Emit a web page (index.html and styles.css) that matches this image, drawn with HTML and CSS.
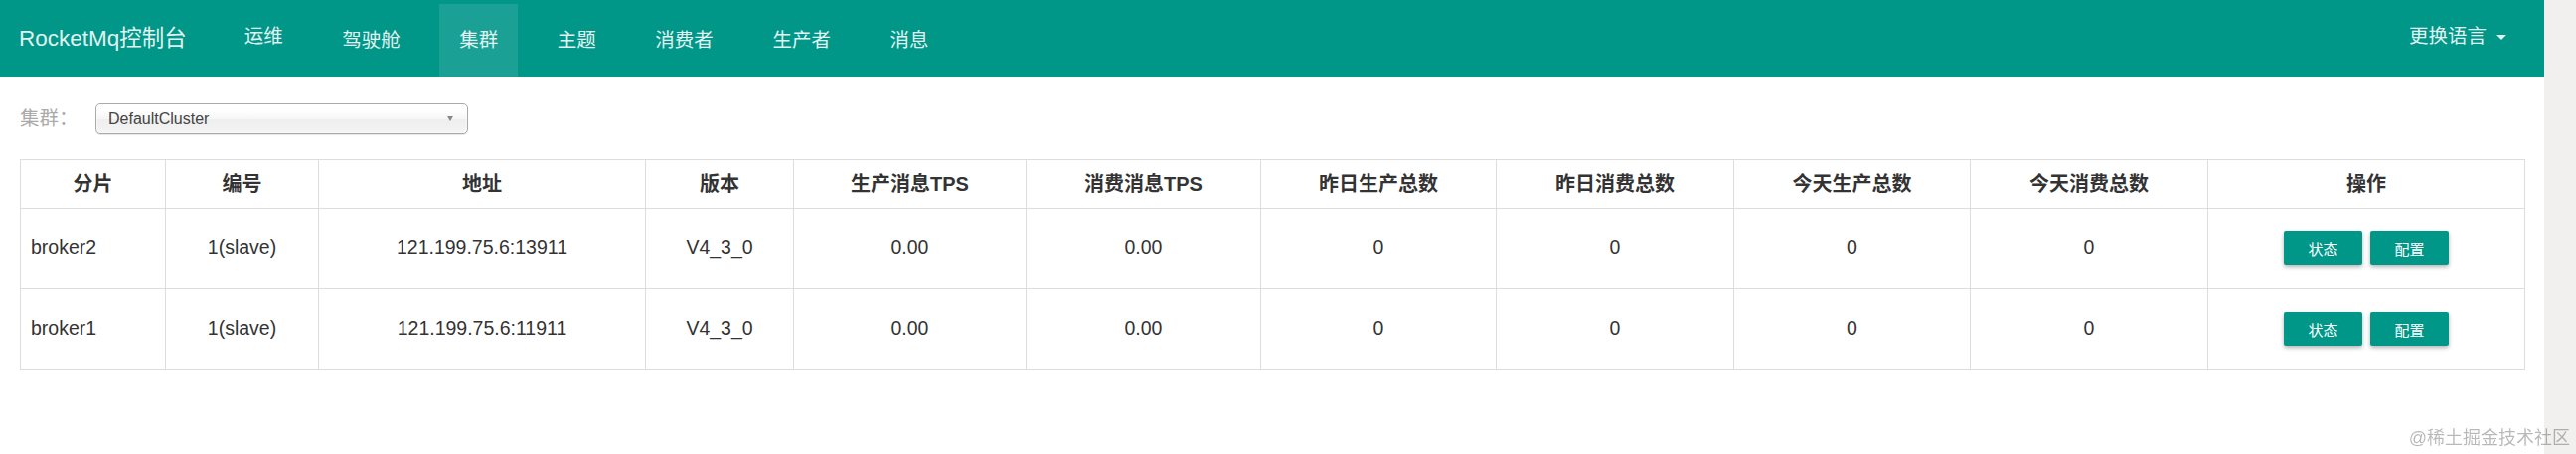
FILE: index.html
```html
<!DOCTYPE html>
<html lang="zh-CN">
<head>
<meta charset="utf-8">
<title>RocketMq控制台</title>
<link rel="stylesheet" href="styles.css">
</head>
<body>
<div class="viewport">
  <div class="page">
    <nav class="navbar">
      <div class="brand">RocketMq控制台</div>
      <ul class="nav">
        <li><a class="nav-link raised">运维</a></li>
        <li><a class="nav-link">驾驶舱</a></li>
        <li><a class="nav-link active">集群</a></li>
        <li><a class="nav-link">主题</a></li>
        <li><a class="nav-link">消费者</a></li>
        <li><a class="nav-link">生产者</a></li>
        <li><a class="nav-link">消息</a></li>
      </ul>
      <div class="nav-right">更换语言<span class="caret"></span></div>
    </nav>
    <main class="content">
      <div class="filter">
        <span class="filter-label">集群：</span>
        <div class="select"><span>DefaultCluster</span><span class="select-arrow"></span></div>
      </div>
      <table class="grid">
        <colgroup>
          <col class="w-shard"><col class="w-id"><col class="w-addr"><col class="w-ver">
          <col class="w-tps"><col class="w-tps2"><col class="w-cnt"><col class="w-cnt2">
          <col class="w-cnt3"><col class="w-cnt4"><col class="w-op">
        </colgroup>
        <thead>
          <tr>
            <th>分片</th><th>编号</th><th>地址</th><th>版本</th>
            <th>生产消息TPS</th><th>消费消息TPS</th><th>昨日生产总数</th><th>昨日消费总数</th>
            <th>今天生产总数</th><th>今天消费总数</th><th>操作</th>
          </tr>
        </thead>
        <tbody>
          <tr>
            <td class="shard">broker2</td><td>1(slave)</td><td>121.199.75.6:13911</td><td>V4_3_0</td>
            <td>0.00</td><td>0.00</td><td>0</td><td>0</td><td>0</td><td>0</td>
            <td><div class="actions"><button class="btn">状态</button><button class="btn">配置</button></div></td>
          </tr>
          <tr>
            <td class="shard">broker1</td><td>1(slave)</td><td>121.199.75.6:11911</td><td>V4_3_0</td>
            <td>0.00</td><td>0.00</td><td>0</td><td>0</td><td>0</td><td>0</td>
            <td><div class="actions"><button class="btn">状态</button><button class="btn">配置</button></div></td>
          </tr>
        </tbody>
      </table>
    </main>
  </div>
  <div class="scrolltrack"></div>
</div>
<div class="watermark">@稀土掘金技术社区</div>
</body>
</html>
```
FILE: styles.css
```css
html, body {
  margin: 0;
  padding: 0;
}
body {
  font-family: "Liberation Sans", "Noto Sans CJK SC", sans-serif;
  color: #333;
  background: #fff;
  overflow: hidden;
}
.viewport {
  display: flex;
  height: 457px;
}
.page {
  flex: 1;
  min-width: 0;
}
.scrolltrack {
  width: 32px;
  background: #f1f0ee;
}

/* navbar */
.navbar {
  height: 78px;
  background: #009688;
  display: flex;
  align-items: stretch;
  padding: 0 18px 0 19px;
  color: #e0f2f1;
}
.brand {
  display: flex;
  align-items: center;
  font-size: 22.5px;
  line-height: 1.2;
  padding-bottom: 2px;
  margin-right: 38px;
}
.nav {
  display: flex;
  list-style: none;
  margin: 4px 0 0;
  padding: 0;
  gap: 19.5px;
}
.nav li {
  display: flex;
}
.nav-link {
  display: flex;
  align-items: center;
  padding: 0 20px;
  font-size: 19.5px;
  line-height: 1.2;
  color: #e0f2f1;
}
.nav-link.raised {
  padding-bottom: 9px;
}
.nav-link.active {
  background: rgba(255, 255, 255, 0.1);
}
.nav-right {
  margin-left: auto;
  display: flex;
  align-items: center;
  padding: 0 20px 4px;
  font-size: 19.5px;
  line-height: 1.2;
}
.caret {
  display: inline-block;
  margin-left: 10px;
  width: 0;
  height: 0;
  border-left: 5px solid transparent;
  border-right: 5px solid transparent;
  border-top: 5px solid #e0f2f1;
}

/* content */
.content {
  padding: 0 20px;
}
.filter {
  display: flex;
  align-items: center;
  margin-top: 26px;
  height: 31px;
}
.filter-label {
  font-size: 19.5px;
  color: #aaa;
  margin-right: 17.5px;
  line-height: 1.2;
}
.select {
  width: 375px;
  height: 31px;
  box-sizing: border-box;
  display: flex;
  align-items: center;
  padding: 0 14px 0 12px;
  border: 1px solid #aaa;
  border-radius: 5px;
  background: linear-gradient(#fff 20%, #f6f6f6 50%, #eee 52%, #f4f4f4 100%);
  box-shadow: inset 0 0 3px #fff, 0 1px 1px rgba(0, 0, 0, 0.1);
  font-size: 16px;
  color: #444;
}
.select-arrow {
  margin-left: auto;
  width: 0;
  height: 0;
  border-left: 3.5px solid transparent;
  border-right: 3.5px solid transparent;
  border-top: 5px solid #888;
}

/* table */
.grid {
  width: 100%;
  margin-top: 25px;
  border-collapse: collapse;
  table-layout: fixed;
}
.w-shard { width: 146px; }
.w-id { width: 154px; }
.w-addr { width: 329px; }
.w-ver { width: 149px; }
.w-tps { width: 234px; }
.w-tps2 { width: 236px; }
.w-cnt { width: 237px; }
.w-cnt2 { width: 239px; }
.w-cnt3 { width: 238px; }
.w-cnt4 { width: 239px; }
.w-op { width: 319px; }

.grid th,
.grid td {
  border: 1px solid #ddd;
  text-align: center;
  vertical-align: middle;
  padding: 0 10px;
  font-size: 19.5px;
  line-height: 1.2;
}
.grid th {
  font-weight: bold;
  color: #333;
  font-size: 20px;
}
.grid td {
  color: #333;
}
.grid thead tr {
  height: 49px;
}
.grid tbody tr {
  height: 81px;
}
.grid td.shard {
  text-align: left;
}
.actions {
  display: flex;
  justify-content: center;
  gap: 8px;
}
.btn {
  width: 79px;
  height: 34px;
  border: 0;
  border-radius: 2px;
  background: #009688;
  color: #fff;
  font-family: inherit;
  font-size: 15px;
  padding: 0;
  box-shadow: 0 2px 4px rgba(0, 0, 0, 0.3);
}

.watermark {
  position: fixed;
  right: 6px;
  bottom: 4px;
  font-size: 18px;
  color: rgba(0, 0, 0, 0.28);
  line-height: 1.2;
}
```
